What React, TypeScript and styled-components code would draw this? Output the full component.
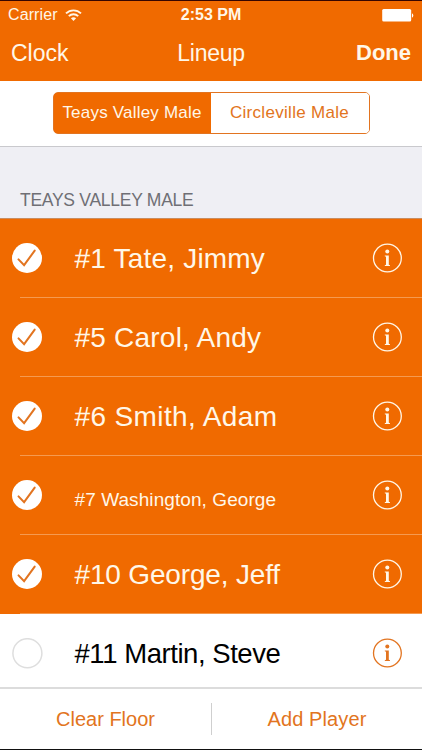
import React from "react";
import styled, { createGlobalStyle } from "styled-components";

const ORANGE = "#f06a00";
const CREAM = "#fff7e8";
const TINT = "#e27420";

const GlobalStyle = createGlobalStyle`
  * { box-sizing: border-box; }
  body { margin: 0; }
  button { appearance: none; border: 0; padding: 0; background: none; font: inherit; color: inherit; cursor: pointer; }
`;

const Screen = styled.div`
  display: flex;
  flex-direction: column;
  width: 422px;
  height: 750px;
  overflow: hidden;
  background: #fff;
  border-top: 1px solid #360500;
  border-bottom: 1px solid #111;
  font-family: "Liberation Sans", Arial, sans-serif;
`;

const Header = styled.header`
  flex: none;
  height: 80px;
  background: ${ORANGE};
  color: ${CREAM};
`;

const Bar = styled.div<{ $height: number; $pad: string }>`
  display: grid;
  grid-template-columns: 1fr auto 1fr;
  align-items: center;
  height: ${(p) => p.$height}px;
  padding: ${(p) => p.$pad};
`;

const Label = styled.span<{ $size: number; $spacing?: number; $bold?: boolean }>`
  font-size: ${(p) => p.$size}px;
  line-height: 1.15;
  letter-spacing: ${(p) => p.$spacing ?? 0}px;
  font-weight: ${(p) => (p.$bold ? 700 : 400)};
  white-space: nowrap;
`;

const Carrier = styled.div`
  display: flex;
  align-items: center;
  gap: 7px;
`;

const End = styled.div`
  display: flex;
  justify-content: flex-end;
`;

const Filter = styled.div`
  flex: none;
  display: flex;
  justify-content: center;
  height: 66px;
  padding-top: 11px;
  border-bottom: 1px solid #c9c9cd;
`;

const Segments = styled.div`
  display: grid;
  grid-template-columns: 157px 1fr;
  width: 317px;
  height: 42px;
  border: 1px solid ${TINT};
  border-radius: 5px;
  overflow: hidden;
  background: linear-gradient(90deg, ${ORANGE} 50%, #fff 50%);
`;

const Segment = styled.button<{ $active?: boolean }>`
  && {
    background: ${(p) => (p.$active ? ORANGE : "#fff")};
    color: ${(p) => (p.$active ? CREAM : TINT)};
  }
`;

const SectionTitle = styled.div`
  flex: none;
  display: flex;
  align-items: flex-end;
  height: 72px;
  padding: 0 20px 8px;
  background: #efeff4;
  border-bottom: 1px solid #c98d60;
  color: #6f6f75;
`;

const List = styled.div`
  flex: 1;
  min-height: 0;
  overflow: hidden;
`;

const Row = styled.div<{ $selected: boolean }>`
  display: grid;
  grid-template-columns: 62.5px 1fr 30px;
  align-items: center;
  height: 79px;
  padding: 0 20px 0 12px;
  background: linear-gradient(${(p) => (p.$selected ? "#f59a50, #f59a50" : "#ddd, #ddd")}) 20px 100% / 100% 1px no-repeat
    ${(p) => (p.$selected ? ORANGE : "#fff")};
  color: ${(p) => (p.$selected ? CREAM : "#000")};
`;

const PlayerName = styled(Label)<{ $drop: number }>`
  padding-top: ${(p) => p.$drop}px;
`;

const Icon = styled.svg`
  display: block;
`;

const InfoButton = styled.button<{ $selected: boolean }>`
  && {
    color: ${(p) => (p.$selected ? CREAM : TINT)};
  }
`;

const Footer = styled.footer`
  flex: none;
  display: grid;
  grid-template-columns: 211px 1px 1fr;
  align-items: center;
  height: 62px;
  border-top: 2px solid #dcdcdc;
  color: ${TINT};
`;

const Divider = styled.div`
  height: 32px;
  background: #cfcfcf;
`;

const Action = styled.button`
  height: 100%;
`;

const WifiIcon = () => (
  <Icon width="17" height="12" viewBox="0 0 17 12" fill="none" stroke={CREAM} strokeWidth="1.9">
    <path d="M1 4.4C5.2 0.3 11.8 0.3 16 4.4" />
    <path d="M3.8 7.2C6.4 4.6 10.6 4.6 13.2 7.2" />
    <path d="M8.5 12L5.9 9.3C7.3 7.9 9.7 7.9 11.1 9.3Z" fill={CREAM} stroke="none" />
  </Icon>
);

const BatteryIcon = () => (
  <Icon width="32" height="13" viewBox="0 0 32 13" fill="#fff">
    <rect x="0.2" y="0" width="29" height="12.5" rx="1.5" />
    <path d="M30 4.3C31.8 5 31.8 8 30 8.7Z" />
  </Icon>
);

const CheckIcon = ({ checked }: { checked: boolean }) => (
  <Icon width="31" height="31" viewBox="0 0 31 31" fill="none">
    {checked ? (
      <>
        <circle cx="15" cy="15" r="15" fill="#fff" />
        <path d="M6.5 16.4L12.1 22.2L22.7 7.6" stroke={TINT} strokeWidth="2" strokeLinecap="round" strokeLinejoin="miter" />
      </>
    ) : (
      <circle cx="15.4" cy="15.2" r="14.5" stroke="#dedede" strokeWidth="1.5" />
    )}
  </Icon>
);

const InfoIcon = () => (
  <Icon width="30" height="31" viewBox="0 0 30 31" fill="none">
    <circle cx="15.4" cy="15" r="13.9" stroke="currentColor" strokeWidth="1.3" />
    <circle cx="15.3" cy="8.6" r="2" fill="currentColor" />
    <path d="M12.8 12.4H16.8V21.8L18 22.2V23.1H12.8V22.2L14 21.8V13.7L12.8 13.3Z" fill="currentColor" />
  </Icon>
);

interface Player {
  text: string;
  size: number;
  spacing: number;
  drop: number;
  selected: boolean;
}

const players: Player[] = [
  { text: "#1 Tate, Jimmy", size: 28, spacing: 0.2, drop: 1, selected: true },
  { text: "#5 Carol, Andy", size: 28, spacing: 0.22, drop: 1, selected: true },
  { text: "#6 Smith, Adam", size: 28, spacing: 0.38, drop: 1, selected: true },
  { text: "#7 Washington, George", size: 19, spacing: 0.08, drop: 8, selected: true },
  { text: "#10 George, Jeff", size: 28, spacing: -0.17, drop: 1, selected: true },
  { text: "#11 Martin, Steve", size: 27.5, spacing: -0.45, drop: 1, selected: false },
];

export default function App() {
  return (
    <>
      <GlobalStyle />
      <Screen>
        <Header>
          <Bar $height={28} $pad="0 8px 0 8px">
            <Carrier>
              <Label $size={16} $spacing={0.1}>Carrier</Label>
              <WifiIcon />
            </Carrier>
            <Label $size={16} $bold>2:53 PM</Label>
            <End><BatteryIcon /></End>
          </Bar>
          <Bar $height={48} $pad="0 11px 0 11px">
            <Label $size={23}>Clock</Label>
            <Label $size={23} $spacing={-0.3}>Lineup</Label>
            <End><Label $size={22} $bold>Done</Label></End>
          </Bar>
        </Header>
        <Filter>
          <Segments>
            <Segment $active><Label $size={17} $spacing={0.2}>Teays Valley Male</Label></Segment>
            <Segment><Label $size={17} $spacing={0.3}>Circleville Male</Label></Segment>
          </Segments>
        </Filter>
        <SectionTitle><Label $size={17.5} $spacing={-0.27}>TEAYS VALLEY MALE</Label></SectionTitle>
        <List>
          {players.map((p) => (
            <Row key={p.text} $selected={p.selected}>
              <CheckIcon checked={p.selected} />
              <PlayerName $size={p.size} $spacing={p.spacing} $drop={p.drop}>{p.text}</PlayerName>
              <InfoButton $selected={p.selected} aria-label={`Details for ${p.text}`}><InfoIcon /></InfoButton>
            </Row>
          ))}
        </List>
        <Footer>
          <Action><Label $size={20}>Clear Floor</Label></Action>
          <Divider />
          <Action><Label $size={20} $spacing={0.1}>Add Player</Label></Action>
        </Footer>
      </Screen>
    </>
  );
}
